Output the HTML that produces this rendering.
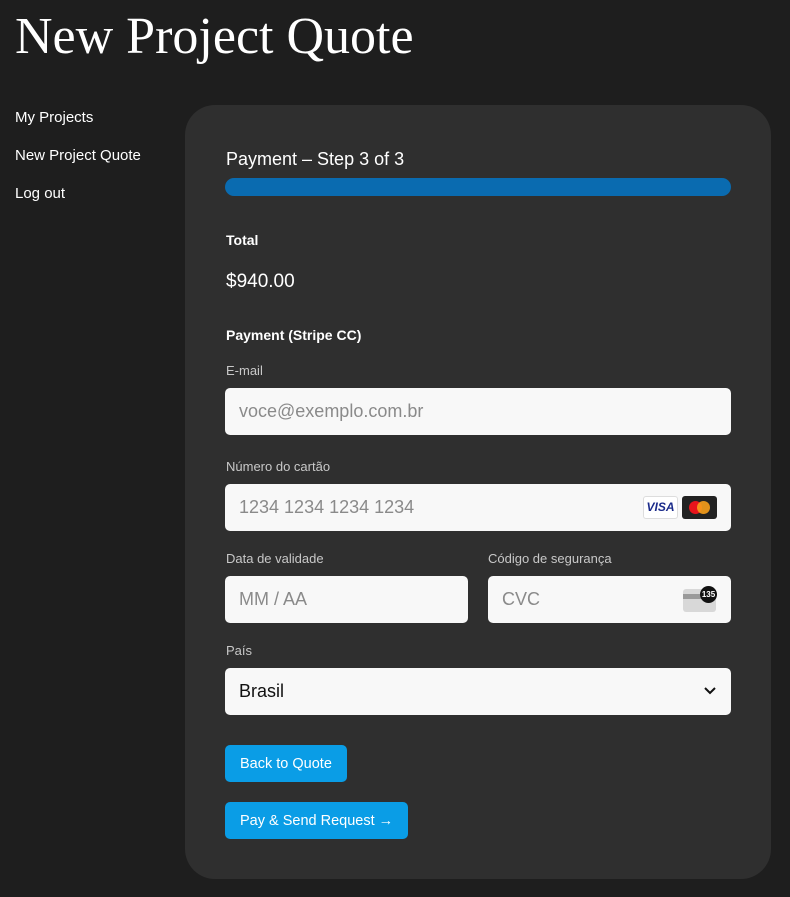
<!DOCTYPE html>
<html><head><meta charset="utf-8"><style>
*{box-sizing:border-box;margin:0;padding:0}
body{width:790px;height:897px;background:#1e1e1e;font-family:"Liberation Sans",sans-serif;color:#fff;position:relative;overflow:hidden}
.a{position:absolute}
h1{position:absolute;left:15px;top:7px;font-family:"Liberation Serif",serif;font-weight:normal;font-size:52px;color:#fff;white-space:nowrap}
.nav{font-size:15px;left:15px}
.card{left:185px;top:105px;width:586px;height:774px;background:#2f2f2f;border-radius:30px}
.lbl{font-size:13px;color:#c8c8c8;left:226px}
.inp{background:#f8f8f8;border-radius:5px;height:47px;color:#8a8a8a;font-size:18px;padding-left:14px;line-height:47px}
.btn{background:#0a9de6;border-radius:5px;color:#fff;font-size:14.5px;height:37px;line-height:39px;padding:0 15px;left:225px}
</style></head><body>
<h1>New Project Quote</h1>
<div class="a nav" style="top:109px">My Projects</div>
<div class="a nav" style="top:147px">New Project Quote</div>
<div class="a nav" style="top:185px">Log out</div>
<div class="a card"></div>
<div class="a" style="left:226px;top:149px;font-size:18px">Payment – Step 3 of 3</div>
<div class="a" style="left:225px;top:178px;width:506px;height:18px;border-radius:9px;background:#0a6bb0"></div>
<div class="a" style="left:226px;top:232px;font-size:14px;font-weight:bold">Total</div>
<div class="a" style="left:226px;top:271px;font-size:19px">$940.00</div>
<div class="a" style="left:226px;top:327px;font-size:14px;font-weight:bold">Payment (Stripe CC)</div>
<div class="a lbl" style="top:363px">E-mail</div>
<div class="a inp" style="left:225px;top:388px;width:506px">voce@exemplo.com.br</div>
<div class="a lbl" style="top:459px">Número do cartão</div>
<div class="a inp" style="left:225px;top:484px;width:506px">1234 1234 1234 1234</div>
<div class="a" style="left:643px;top:496px;width:35px;height:23px;background:#fff;border:1px solid #ddd;border-radius:3px;color:#1a2a8a;font-weight:bold;font-style:italic;font-size:12px;text-align:center;line-height:21px">VISA</div>
<div class="a" style="left:682px;top:496px;width:35px;height:23px;background:#222;border-radius:3px"></div>
<div class="a" style="left:689px;top:501px;width:13px;height:13px;border-radius:50%;background:#e8141c"></div>
<div class="a" style="left:697px;top:501px;width:13px;height:13px;border-radius:50%;background:#f79e1b;opacity:.9"></div>
<div class="a lbl" style="top:551px">Data de validade</div>
<div class="a lbl" style="top:551px;left:488px">Código de segurança</div>
<div class="a inp" style="left:225px;top:576px;width:243px">MM / AA</div>
<div class="a inp" style="left:488px;top:576px;width:243px">CVC</div>
<div class="a" style="left:683px;top:589px;width:33px;height:23px;background:#d8d8d8;border-radius:3px"></div>
<div class="a" style="left:683px;top:594px;width:33px;height:5px;background:#9a9a9a"></div>
<div class="a" style="left:700px;top:586px;width:17px;height:17px;border-radius:50%;background:#111;color:#fff;font-size:8px;text-align:center;line-height:17px;font-weight:bold">135</div>
<div class="a lbl" style="top:643px">País</div>
<div class="a inp" style="left:225px;top:668px;width:506px;color:#111">Brasil</div>
<svg class="a" style="left:703px;top:686px" width="14" height="10" viewBox="0 0 14 10"><path d="M2 2l5 5 5-5" stroke="#111" stroke-width="2" fill="none"/></svg>
<div class="a btn" style="top:745px">Back to Quote</div>
<div class="a btn" style="top:802px">Pay &amp; Send Request →</div>
</body></html>
